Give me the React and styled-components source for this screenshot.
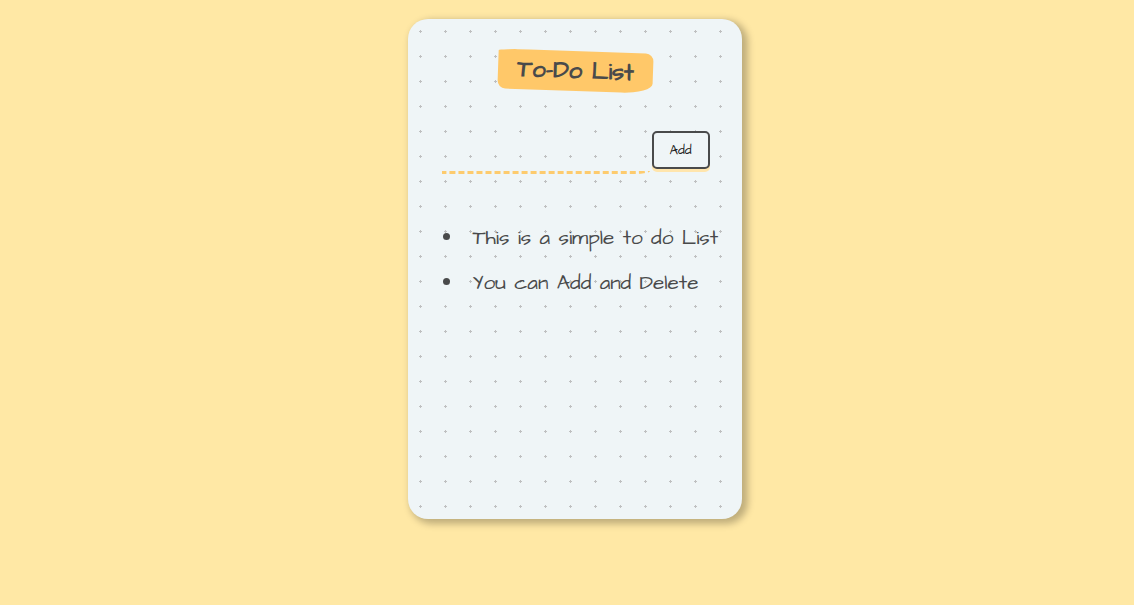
import React from "react";
import styled, { createGlobalStyle } from "styled-components";

const GlobalStyle = createGlobalStyle`
  * { box-sizing: border-box; }
  body {
    margin: 0;
    background: #ffe8a5;
    color: #494a4b;
    font-family: "Architects Daughter", Lato, "Liberation Sans", sans-serif;
  }
`;

const Page = styled.main`
  display: flex;
  justify-content: center;
  min-height: 605px;
  padding: 19px 0 0 16px;
`;

const Card = styled.section`
  display: flex;
  flex-direction: column;
  width: 334px;
  height: 500px;
  padding: 32px 0 0 34px;
  border-radius: 20px;
  background-color: #eff5f7;
  background-image: radial-gradient(#bfc0c1 7.2%, transparent 0);
  background-size: 25px 25px;
  box-shadow: 4px 3px 7px 2px #00000040;
`;

const Title = styled.h1`
  align-self: center;
  width: 155px;
  height: 40px;
  margin: 0 34px 0 0;
  border-radius: 20% 5% 20% 5% / 5% 20% 25% 20%;
  background: #ffc869;
  font-size: 24px;
  line-height: 41px;
  text-align: center;
  white-space: nowrap;
  transform: rotate(2deg);
`;

const Form = styled.form`
  display: flex;
  align-items: flex-start;
  gap: 2px;
  margin: 41px 0 0;
`;

const Field = styled.input`
  width: 208px;
  height: 42px;
  padding: 4px;
  border: 0;
  border-bottom: 3px dashed #fdcb6e;
  border-radius: 0 0 15px 0 / 0 0 3px 0;
  background: transparent;
  color: inherit;
  font: inherit;
  outline: none;
`;

const AddButton = styled.button`
  width: 58px;
  height: 38px;
  margin-top: -1px;
  padding: 0 1px 0 0;
  border: 2px solid #494a4b;
  border-radius: 5px;
  background: #eff5f7;
  box-shadow: 0 3px 0 #ffe5ad;
  color: #222;
  font-family: inherit;
  font-size: 13.333px;
`;

const List = styled.ul`
  display: flex;
  flex-direction: column;
  gap: 15px;
  margin: 48px 0 0;
  padding: 0;
  list-style: none;
`;

const Item = styled.li`
  display: flex;
  align-items: center;
  height: 30px;
  font-size: 20.8px;
  line-height: 32px;
  padding-top: 2px;
  white-space: nowrap;

  &::before {
    content: "";
    flex: none;
    width: 7px;
    height: 7px;
    margin: 0 22.5px 4px 1px;
    border-radius: 50%;
    background: #494a4b;
  }
`;

export default function App() {
  return (
    <>
      <GlobalStyle />
      <Page>
        <Card>
          <Title>To-Do List</Title>
          <Form onSubmit={(e) => e.preventDefault()}>
            <Field />
            <AddButton>Add</AddButton>
          </Form>
          <List>
            <Item>This is a simple to do List</Item>
            <Item>You can Add and Delete</Item>
          </List>
        </Card>
      </Page>
    </>
  );
}
